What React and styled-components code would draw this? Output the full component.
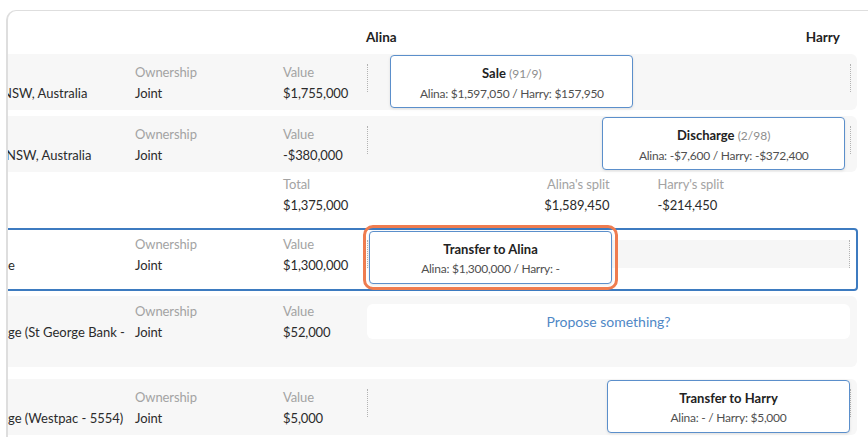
import React from 'react';
import styled, { createGlobalStyle } from 'styled-components';

const GlobalStyle = createGlobalStyle`
  html, body {
    margin: 0;
    padding: 0;
    background: #ffffff;
    font-family: Lato, "Open Sans", sans-serif;
    color: #2b2b2b;
  }
`;

const Page = styled.div`
  width: 868px;
  height: 437px;
  overflow: hidden;
  padding: 10px 0 0 6px;
  box-sizing: border-box;
`;

const Sheet = styled.div`
  width: 920px;
  border-top: 1px solid #dedede;
  border-left: 2px solid #dedede;
  border-top-left-radius: 10px;
  background: #fff;
  min-height: 500px;
`;

const Rows = styled.div`
  width: 849px;
  display: flex;
  flex-direction: column;
`;

const Header = styled.div`
  height: 43px;
  box-sizing: border-box;
  padding: 9px 17px 0 358px;
  display: flex;
  align-items: center;
  justify-content: space-between;
  font-weight: 700;
  font-size: 13.5px;
  color: #222;
`;

const Row = styled.div`
  display: grid;
  grid-template-columns: 127px 148px 84px 1fr;
  min-height: ${(p) => p.$height}px;
  box-sizing: border-box;
  margin-bottom: ${(p) => p.$gap || 0}px;
  background: ${(p) => (p.$selected || p.$plain ? '#fff' : '#f7f7f7')};
  border: ${(p) => (p.$selected ? '2px solid #3d7bc0' : 'none')};
  border-left: none;
  border-radius: ${(p) => (p.$selected ? '0 4px 4px 0' : '0 6px 6px 0')};
  width: ${(p) => (p.$selected ? '850px' : '849px')};
  --pad: ${(p) => p.$pad}px;
`;

const Cell = styled.div`
  padding-top: var(--pad);
  display: flex;
  flex-direction: column;
  font-size: 13px;
  line-height: 21px;
  letter-spacing: -0.1px;
`;

const Name = styled.div`
  padding-top: calc(var(--pad) + 21px);
  font-size: 13px;
  line-height: 21px;
  white-space: nowrap;
  overflow: hidden;
  color: #2b2b2b;

  span {
    display: block;
    margin-left: ${(p) => p.$shift || 0}px;
  }
`;

const Label = styled.span`
  color: #a3a3a3;
`;

const Value = styled.span`
  color: #2b2b2b;
`;

const Split = styled.div`
  display: grid;
  padding: 1px 7px 2px 2px;
`;

const Track = styled.div`
  grid-area: 1 / 1;
  align-self: start;
  margin: 9px -1px 0 -2px;
  height: 28px;
  background: ${(p) => (p.$shaded ? '#f6f6f6' : 'transparent')};
  border-left: 1px dotted #b3b3b3;
  border-right: 1px dotted #b3b3b3;
`;

const Deal = styled.div`
  grid-area: 1 / 1;
  justify-self: start;
  align-self: start;
  width: 243px;
  height: 53px;
  box-sizing: border-box;
  margin-left: calc((100% - 243px) * ${(p) => p.$share});
  background: #fff;
  border: 1.5px solid #5b8fcb;
  border-radius: 4px;
  box-shadow: 0 1px 3px rgba(0, 0, 0, 0.1);
  display: flex;
  flex-direction: column;
  align-items: center;
  padding-top: 7px;
  line-height: 20px;
  outline: ${(p) => (p.$focused ? '3px solid #ef7c4f' : 'none')};
  outline-offset: 3px;
`;

const DealTitle = styled.div`
  font-size: 13px;
  font-weight: 700;
  color: #222;

  small {
    font-size: 12px;
    font-weight: 400;
    color: #8d8d8d;
  }
`;

const DealSplit = styled.div`
  font-size: 12px;
  letter-spacing: -0.25px;
  color: #505050;
`;

const Propose = styled.div`
  margin: 7px 0 0 -2px;
  height: 35px;
  background: #fff;
  border-radius: 6px;
  display: flex;
  align-items: center;
  justify-content: center;
  color: #4f88c6;
  font-size: 14px;
`;

const Totals = styled.div`
  display: grid;
  grid-template-columns: 1fr 1fr;
  padding: 0 7px 0 2px;
  font-size: 13px;
  line-height: 21px;
  letter-spacing: -0.1px;
`;

const TotalCol = styled.div`
  display: flex;
  flex-direction: column;
  align-items: ${(p) => (p.$right ? 'flex-end' : 'flex-start')};
  padding-left: ${(p) => (p.$right ? 0 : 48)}px;
`;

function AssetRow({ name, shift, value, deal, height = 56, pad = 8, gap, selected, propose }) {
  return (
    <Row $height={height} $pad={pad} $gap={gap} $selected={selected}>
      <Name $shift={shift}>
        <span>{name}</span>
      </Name>
      <Cell>
        <Label>Ownership</Label>
        <Value>Joint</Value>
      </Cell>
      <Cell>
        <Label>Value</Label>
        <Value>{value}</Value>
      </Cell>
      {propose ? (
        <Split>
          <Propose>Propose something?</Propose>
        </Split>
      ) : (
        <Split>
          <Track $shaded={selected} />
          {deal && (
            <Deal $share={deal.share} $focused={deal.focused}>
              <DealTitle>
                {deal.title}
                {deal.ratio && <small> ({deal.ratio})</small>}
              </DealTitle>
              <DealSplit>{deal.split}</DealSplit>
            </Deal>
          )}
        </Split>
      )}
    </Row>
  );
}

export default function App() {
  return (
    <>
      <GlobalStyle />
      <Page>
        <Sheet>
          <Rows>
            <Header>
              <span>Alina</span>
              <span>Harry</span>
            </Header>
            <AssetRow
              name="NSW, Australia"
              shift={-6}
              value="$1,755,000"
              gap={6}
              deal={{ title: 'Sale', ratio: '91/9', share: 0.09, split: 'Alina: $1,597,050 / Harry: $157,950' }}
            />
            <AssetRow
              name="NSW, Australia"
              shift={-2}
              value="-$380,000"
              gap={2}
              deal={{ title: 'Discharge', ratio: '2/98', share: 0.98, split: 'Alina: -$7,600 / Harry: -$372,400' }}
            />
            <Row $height={54} $pad={0} $plain>
              <div />
              <div />
              <Cell>
                <Label>Total</Label>
                <Value>$1,375,000</Value>
              </Cell>
              <Totals>
                <TotalCol $right>
                  <Label>Alina's split</Label>
                  <Value>$1,589,450</Value>
                </TotalCol>
                <TotalCol>
                  <Label>Harry's split</Label>
                  <Value>-$214,450</Value>
                </TotalCol>
              </Totals>
            </Row>
            <AssetRow
              name="e"
              value="$1,300,000"
              height={63}
              pad={4}
              gap={5}
              selected
              deal={{ title: 'Transfer to Alina', share: 0, focused: true, split: 'Alina: $1,300,000 / Harry: -' }}
            />
            <AssetRow
              name="ge (St George Bank -"
              value="$52,000"
              height={71}
              pad={5}
              gap={12}
              propose
            />
            <AssetRow
              name="ge (Westpac - 5554)"
              value="$5,000"
              deal={{ title: 'Transfer to Harry', share: 1, split: 'Alina: - / Harry: $5,000' }}
            />
          </Rows>
        </Sheet>
      </Page>
    </>
  );
}
